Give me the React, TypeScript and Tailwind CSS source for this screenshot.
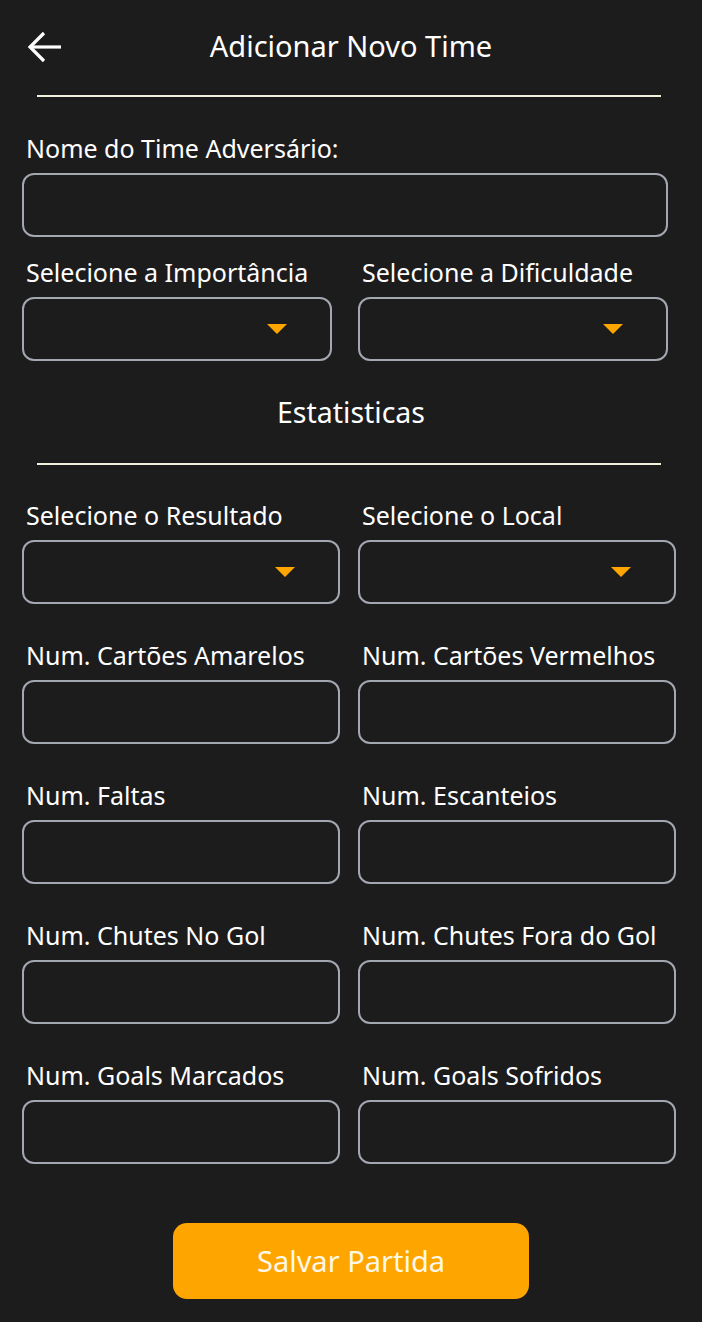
import React from "react";

const Field = ({ label, select }: { label: string; select?: boolean }) => {
  return (
    <div className="flex flex-col">
      <span className="h-[50px] whitespace-nowrap pl-1 text-[25px] leading-[50px] text-white">{label}</span>
      <div className="relative h-[64px] rounded-[12px] border-2 border-[#a3a7b0] bg-[#1c1c1c]">
        {select && (
          <svg className="absolute right-[43px] top-[25px]" width="20" height="10" viewBox="0 0 20 10">
            <polygon points="0,0 20,0 10,10" fill="#ffa500" />
          </svg>
        )}
      </div>
    </div>
  );
};

export default function App() {
  return (
    <div className="min-h-[1322px] w-[702px] bg-[#1c1c1c] font-['Noto_Sans',sans-serif]">
      {/* header */}
      <div className="relative flex h-[95px] items-center justify-center pb-[4px]">
        <button className="absolute left-[27px] top-[30px] text-white">
          <svg width="36" height="34" viewBox="0 0 36 34" fill="none" stroke="white" strokeWidth="3.2">
            <path d="M34 17H4" />
            <path d="M17 3L3 17l14 14" />
          </svg>
        </button>
        <h1 className="text-[29px] text-white">Adicionar Novo Time</h1>
      </div>
      <div className="ml-[37px] h-[2px] w-[624px] bg-[#f2efdc]" />

      <div className="pl-[22px] pr-[34px] pt-[26px]">
        <span className="block h-[50px] pl-1 text-[25px] leading-[50px] text-white">Nome do Time Adversário:</span>
        <div className="h-[64px] rounded-[12px] border-2 border-[#a3a7b0]" />
      </div>

      <div className="mt-[10px] grid grid-cols-2 gap-x-[26px] pl-[22px] pr-[34px]">
        <Field label="Selecione a Importância" select />
        <Field label="Selecione a Dificuldade" select />
      </div>

      <div className="flex h-[102px] items-center justify-center">
        <span className="text-[28.5px] text-white">Estatisticas</span>
      </div>
      <div className="ml-[37px] h-[2px] w-[624px] bg-[#f2efdc]" />

      <div className="grid grid-cols-2 gap-x-[18px] gap-y-[26px] pl-[22px] pr-[26px] pt-[25px]">
        <Field label="Selecione o Resultado" select />
        <Field label="Selecione o Local" select />
        <Field label="Num. Cartões Amarelos" />
        <Field label="Num. Cartões Vermelhos" />
        <Field label="Num. Faltas" />
        <Field label="Num. Escanteios" />
        <Field label="Num. Chutes No Gol" />
        <Field label="Num. Chutes Fora do Gol" />
        <Field label="Num. Goals Marcados" />
        <Field label="Num. Goals Sofridos" />
      </div>

      <div className="flex justify-center pt-[59px]">
        <button className="h-[76px] w-[356px] rounded-[14px] bg-[#ffa500] text-[29px] text-[#fff8e6]">
          Salvar Partida
        </button>
      </div>
    </div>
  );
}
